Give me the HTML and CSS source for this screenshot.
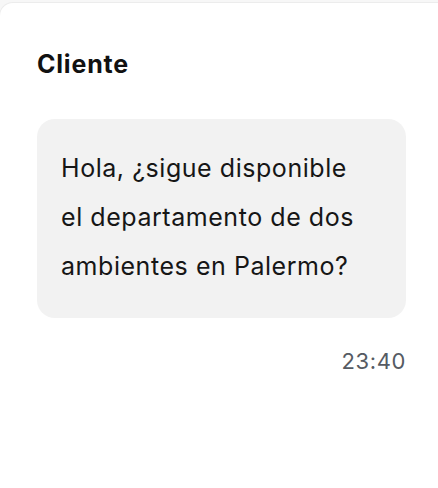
FILE: index.html
```html
<!DOCTYPE html>
<html lang="es">
<head>
<meta charset="utf-8">
<link rel="stylesheet" href="styles.css">
</head>
<body>
<div class="card">
  <h1 class="sender">Cliente</h1>
  <div class="bubble">
    <p class="msg">Hola, ¿sigue disponible el departamento de dos ambientes en Palermo?</p>
  </div>
  <div class="time">23:40</div>
</div>
</body>
</html>
```
FILE: styles.css
```css
html, body {
  margin: 0;
  padding: 0;
  background: #f7f7f7;
  height: 100%;
}
body {
  font-family: Inter, "Noto Sans", sans-serif;
  overflow: hidden;
}
.card {
  margin-top: 2px;
  margin-left: -1px;
  background: #ffffff;
  border: 1px solid #ececec;
  border-right: none;
  border-bottom: none;
  border-radius: 14px 0 0 0;
  height: calc(100vh - 2px);
  padding: 47px 0 0 37px;
  box-sizing: border-box;
}
.sender {
  margin: 0;
  font-size: 25px;
  font-weight: 700;
  line-height: 28px;
  color: #111111;
  letter-spacing: 0.8px;
}
.bubble {
  margin-top: 41px;
  width: 369px;
  box-sizing: border-box;
  background: #f2f2f2;
  border-radius: 18px;
  padding: 25px 48px 27px 24px;
}
.msg {
  margin: 0;
  font-size: 25px;
  line-height: 49px;
  letter-spacing: 0.55px;
  color: #161616;
}
.time {
  width: 369px;
  text-align: right;
  margin-top: 29px;
  font-size: 22px;
  line-height: 28px;
  letter-spacing: 0.6px;
  color: #565b63;
}
```
